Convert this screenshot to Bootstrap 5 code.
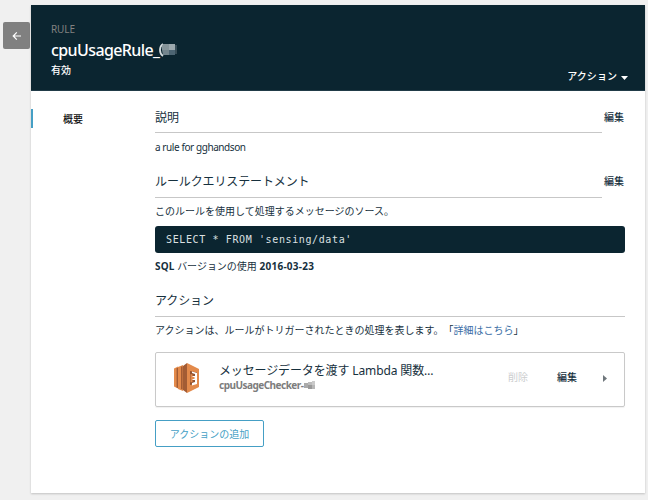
<!DOCTYPE html>
<html lang="ja">
<head>
<meta charset="utf-8">
<meta name="viewport" content="width=device-width, initial-scale=1">
<title>cpuUsageRule</title>
<link href="https://cdn.jsdelivr.net/npm/bootstrap@5.3.0/dist/css/bootstrap.min.css" rel="stylesheet">
<style>
body{background:#f0f0f0;color:#16303d;font:10px/16px "Noto Sans","Noto Sans CJK JP",sans-serif;height:500px;overflow:hidden;text-spacing-trim:space-all}
.shell{padding:5px 3px 7px 3px;height:500px}
.back{width:27px;height:27px;margin-top:17px;background:#808080;border-radius:2px}
.panel{margin-left:1px;background:#fff;box-shadow:0 1px 2px rgba(0,0,0,.2)}
.rule-head{height:86px;background:#0b2530;border-bottom:1px solid #213b48;padding:17px 17px 0 20px}
.kind{color:#828280;line-height:15px;letter-spacing:-.1px}
.rule-name{font-size:16px;line-height:22px;margin-top:2px;font-weight:500;letter-spacing:-.6px}
.state{font-weight:500;line-height:16px;margin-top:1px}
.menu{gap:4px;line-height:16px;font-weight:500;margin-bottom:6px;letter-spacing:.05px}
.side{width:124px;padding-top:18px}
.tab{height:19px;border-left:2px solid #459fc5;padding:1px 0 0 30px;line-height:19px;font-weight:500;color:#111}
.main{padding:18px 20px 0 0}
.sec{height:26px;gap:2px}
.s1{height:24px}
.sec h2{font-size:12px;line-height:18px;border-bottom:1px solid #c7c7c7;font-weight:400;letter-spacing:-.12px}
.s-gap h2{padding-top:1px}
.edit{line-height:18px;font-weight:500;width:21px}
.s1 .edit{margin-top:-1px}
.note{margin-top:6px}
.latin{letter-spacing:-.42px}
.s-gap{margin-top:17px}
.query{height:27px;margin-top:7px;border-radius:3px;background:#0b2530;color:#dce0e2;font:10px/27px "DejaVu Sans Mono",monospace;padding-left:11px}
.query code{font:inherit;color:inherit;letter-spacing:.62px}
.ver{margin-top:5px;letter-spacing:.13px}
.ver span{letter-spacing:-.02px}
.ver b:last-child{letter-spacing:.25px}
.after{margin-top:5px}
a.more{color:#396da5}
.action{height:55px;margin-top:14px;border:1px solid #c9c9c9;border-radius:2px;padding:0 17px 0 18px;box-shadow:0 1px 1px rgba(0,0,0,.06)}
.about{margin-left:19px;margin-top:-6px}
.about h3{font-size:12px;line-height:17px;letter-spacing:-.13px;font-weight:400}
.fn{color:#7d7d7d;font-weight:700;line-height:12px;letter-spacing:-.52px}
.fn svg{margin-left:1px}
.off{color:#cccecf}
.ops{gap:29px;margin-top:-5px}
.btn.add{--bs-btn-border-color:#459fc5;--bs-btn-color:#459fc5;width:109px;height:27px;margin-top:13px;border:1px solid #459fc5;border-radius:2px;color:#459fc5;font-size:10px;line-height:26px;padding:0}
</style>
</head>
<body>
<div class="shell d-flex">
  <button class="back btn border-0 p-0 d-flex align-items-center justify-content-center flex-shrink-0" aria-label="戻る">
    <svg width="10" height="10" viewBox="0 0 10 10" fill="none" stroke="#fff" stroke-width="1.2"><path d="M9 5H1.3M4.8 1.3 1.2 5l3.6 3.7"/></svg>
  </button>
  <div class="panel flex-grow-1 d-flex flex-column">
    <header class="rule-head text-white d-flex justify-content-between">
      <div>
        <div class="kind">RULE</div>
        <h1 class="rule-name mb-0 d-flex align-items-center">cpuUsageRule_<svg width="19" height="16" viewBox="0 0 19 16"><path d="M4 2Q1 4 1 8t3 6" fill="none" stroke="#d5dcde" stroke-width="1.8"/><path fill="#869499" d="M4 2h6v6H3V4z"/><path fill="#73858d" d="M3 8h7v5H4z"/><path fill="#9ca8ad" d="M10 2h6v6h-6z"/><path fill="#4d6573" d="M10 8h6v5h-6z"/><path fill="#374c56" d="M16 3h2v9h-2z"/></svg></h1>
        <div class="state">有効</div>
      </div>
      <div class="menu d-flex align-items-center align-self-end">アクション<svg width="7" height="4" viewBox="0 0 7 4" style="margin-top:4px"><path d="M0 0h7L3.5 4z" fill="#fff"/></svg></div>
    </header>
    <div class="d-flex flex-grow-1">
      <nav class="side flex-shrink-0"><div class="tab">概要</div></nav>
      <main class="main flex-grow-1">
        <div class="sec s1 d-flex"><h2 class="flex-grow-1 mb-0">説明</h2><span class="edit">編集</span></div>
        <div class="note latin">a rule for gghandson</div>
        <div class="sec s-gap d-flex"><h2 class="flex-grow-1 mb-0">ルールクエリステートメント</h2><span class="edit">編集</span></div>
        <div class="note after">このルールを使用して処理するメッセージのソース。</div>
        <div class="query"><code>SELECT * FROM 'sensing/data'</code></div>
        <div class="note ver"><b>SQL</b> <span>バージョンの使用</span> <b>2016-03-23</b></div>
        <div class="sec s-gap d-flex"><h2 class="flex-grow-1 mb-0">アクション</h2></div>
        <div class="note after">アクションは、ルールがトリガーされたときの処理を表します。「<a href="#" class="more text-decoration-none">詳細はこちら</a>」</div>
        <div class="action d-flex align-items-center">
          <svg width="26" height="30" viewBox="0 0 26 30" style="margin-top:-4px"><path fill="#e38a4b" d="M0 5.500l4-2v22l-4-2zM4 4l5-2v26l-5-2z"/><path fill="#a35c34" d="M2.600 5h1.400v20l-1.400-.600zM7 3.500h1.600v23l-1.600-.600zM9 3l4-3v30l-4-3z"/><path fill="#e38a4b" d="M13 0l12 6v18l-12 6z"/><path fill="#945230" d="M16 8l7 1.500v11L16 22z"/><path fill="#fff" d="M18 8.500l5 1.500v11l-5 1.500v-2.500l3-1v-8l-3-1z"/><path fill="#fff" d="M18 13h3v4h-3z"/><path fill="#e38a4b" d="M16.500 11l2 .5v2.500h2v2h-2v3l-2 .5z"/></svg>
          <div class="about">
            <h3 class="mb-0">メッセージデータを渡す Lambda 関数…</h3>
            <div class="fn d-flex align-items-center">cpuUsageChecker-<svg width="12" height="9" viewBox="0 0 12 9" shape-rendering="crispEdges"><path fill="#aaa" d="M0 2h4v5H0z"/><path fill="#bcbcbc" d="M4 1h4v3H4z"/><path fill="#999" d="M4 4h4v4H4z"/><path fill="#cacaca" d="M8 0h3v4H8z"/><path fill="#b7b7b7" d="M8 4h3v4H8z"/></svg></div>
          </div>
          <div class="ops d-flex align-items-center ms-auto">
            <span class="off">削除</span><span class="fw-medium">編集</span>
            <svg width="4" height="7" viewBox="0 0 4 7" style="margin:3px 0 0 -3px"><path d="M0 0v7l4-3.500z" fill="#6f777c"/></svg>
          </div>
        </div>
        <button class="add btn d-block">アクションの追加</button>
      </main>
    </div>
  </div>
</div>
<script src="https://cdn.jsdelivr.net/npm/bootstrap@5.3.0/dist/js/bootstrap.bundle.min.js"></script>
</body>
</html>
